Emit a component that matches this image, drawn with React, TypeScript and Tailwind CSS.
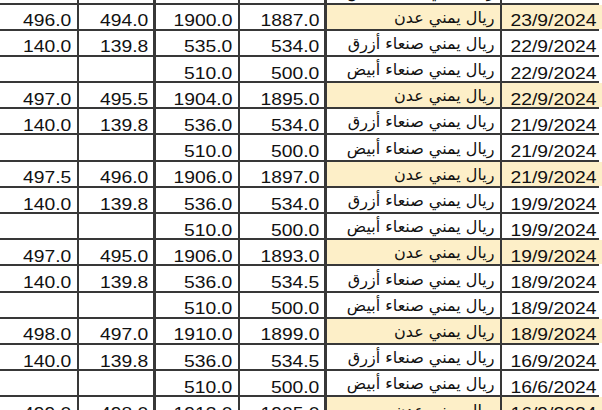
import React from "react";

type Row = {
  a: string;
  b: string;
  c: string;
  d: string;
  name: string;
  date: string;
  hl: boolean;
};

const ADEN = "ريال يمني عدن";
const BLUE = "ريال يمني صنعاء أزرق";
const WHITE = "ريال يمني صنعاء أبيض";

const rows: Row[] = [
  { a: "", b: "", c: "", d: "", name: WHITE, date: "", hl: false },
  { a: "496.0", b: "494.0", c: "1900.0", d: "1887.0", name: ADEN, date: "23/9/2024", hl: true },
  { a: "140.0", b: "139.8", c: "535.0", d: "534.0", name: BLUE, date: "22/9/2024", hl: false },
  { a: "", b: "", c: "510.0", d: "500.0", name: WHITE, date: "22/9/2024", hl: false },
  { a: "497.0", b: "495.5", c: "1904.0", d: "1895.0", name: ADEN, date: "22/9/2024", hl: true },
  { a: "140.0", b: "139.8", c: "536.0", d: "534.0", name: BLUE, date: "21/9/2024", hl: false },
  { a: "", b: "", c: "510.0", d: "500.0", name: WHITE, date: "21/9/2024", hl: false },
  { a: "497.5", b: "496.0", c: "1906.0", d: "1897.0", name: ADEN, date: "21/9/2024", hl: true },
  { a: "140.0", b: "139.8", c: "536.0", d: "534.0", name: BLUE, date: "19/9/2024", hl: false },
  { a: "", b: "", c: "510.0", d: "500.0", name: WHITE, date: "19/9/2024", hl: false },
  { a: "497.0", b: "495.0", c: "1906.0", d: "1893.0", name: ADEN, date: "19/9/2024", hl: true },
  { a: "140.0", b: "139.8", c: "536.0", d: "534.5", name: BLUE, date: "18/9/2024", hl: false },
  { a: "", b: "", c: "510.0", d: "500.0", name: WHITE, date: "18/9/2024", hl: false },
  { a: "498.0", b: "497.0", c: "1910.0", d: "1899.0", name: ADEN, date: "18/9/2024", hl: true },
  { a: "140.0", b: "139.8", c: "536.0", d: "534.5", name: BLUE, date: "16/9/2024", hl: false },
  { a: "", b: "", c: "510.0", d: "500.0", name: WHITE, date: "16/6/2024", hl: false },
  { a: "499.0", b: "498.0", c: "1913.0", d: "1905.0", name: ADEN, date: "16/9/2024", hl: true },
];

function Num({ v, hl }: { v: string; hl?: boolean }) {
  return (
    <div
      className={`flex min-w-0 items-end justify-end pr-[5px] ${
        hl ? "bg-[#fdefc8]" : "bg-white"
      }`}
    >
      <span className="inline-block origin-right scale-x-[1.17] whitespace-nowrap font-['Liberation_Sans',Arial,sans-serif] text-[16.5px] leading-none text-[#111]">
        {v}
      </span>
    </div>
  );
}

export default function App() {
  return (
    <div className="h-[410px] w-[602px] overflow-hidden bg-white">
      <div className="mt-[-21.7px] flex w-[599px] flex-col gap-y-[2px] bg-[#383838] pb-[2px]">
        {rows.map((r, i) => (
          <div
            key={i}
            className="grid h-[24.2px] shrink-0 grid-cols-[76.5px_74px_82px_84px_173px_99.5px] gap-x-[2.5px] pr-[2.5px]"
          >
            <Num v={r.a} />
            <Num v={r.b} />
            <Num v={r.c} />
            <Num v={r.d} />
            <div
              className={`flex min-w-0 items-end justify-end pr-[5px] pb-[3px] ${
                r.hl ? "bg-[#fdefc8]" : "bg-white"
              }`}
            >
              <span
                dir="rtl"
                className="whitespace-nowrap font-['DejaVu_Sans',sans-serif] text-[16px] leading-none text-[#111]"
              >
                {r.name}
              </span>
            </div>
            <Num v={r.date} hl={r.hl} />
          </div>
        ))}
      </div>
    </div>
  );
}
